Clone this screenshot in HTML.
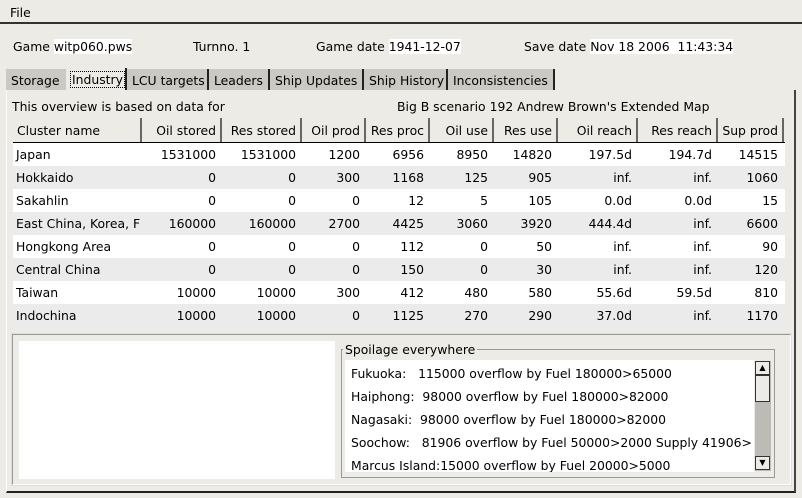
<!DOCTYPE html>
<html><head><style>
body{margin:0;width:802px;height:498px;background:#edebe6;font-family:"DejaVu Sans","Liberation Sans",sans-serif;font-size:12.4px;color:#000;position:relative;overflow:hidden}
.a{position:absolute;white-space:nowrap}
.tab{position:absolute;top:69px;height:21px;line-height:23px;background:#cbc9c3;border-right:2px solid #222;padding-left:5px;box-sizing:border-box;white-space:nowrap;overflow:hidden}
.hd{position:absolute;top:118px;height:24px;line-height:26px;text-align:right;padding-right:4px;box-sizing:border-box;border-right:2px solid #666;background:#edebe6;white-space:nowrap}
.row{position:absolute;left:13px;width:772px;height:23px;line-height:24px;white-space:nowrap}
.row span{position:absolute;text-align:right}
.row span:nth-child(2){right:569px}.row span:nth-child(3){right:489px}.row span:nth-child(4){right:425px}.row span:nth-child(5){right:361px}.row span:nth-child(6){right:297px}.row span:nth-child(7){right:233px}.row span:nth-child(8){right:153px}.row span:nth-child(9){right:73px}.row span:nth-child(10){right:7px}
</style></head><body>
<div class="a" style="left:0;top:0;width:802px;height:24px;border-bottom:2px solid #333;box-sizing:border-box"></div>
<div class="a" style="left:10px;top:5px">File</div>
<div class="a" style="left:13px;top:39px">Game <span style="background:#fff">witp060.pws</span></div>
<div class="a" style="left:193px;top:39px">Turnno. 1</div>
<div class="a" style="left:316px;top:39px">Game date <span style="background:#fff">1941-12-07</span></div>
<div class="a" style="left:524px;top:39px">Save date <span style="background:#fff">Nov 18 2006 &nbsp;11:43:34</span></div>
<div class="tab" style="left:6px;width:60px;border-right:none">Storage</div>
<div class="tab" style="left:66px;width:61px;background:#edebe6;top:68px;height:22px;line-height:24px"><span style="outline:1px dotted #000;padding:0 1px">Industry</span></div>
<div class="tab" style="left:127px;width:82px">LCU targets</div>
<div class="tab" style="left:209px;width:61px">Leaders</div>
<div class="tab" style="left:270px;width:94px">Ship Updates</div>
<div class="tab" style="left:364px;width:84px">Ship History</div>
<div class="tab" style="left:448px;width:107px">Inconsistencies</div>
<div class="a" style="left:6px;top:90px;width:790px;height:403px;border-right:2px solid #444;border-bottom:2px solid #222;border-left:1px solid #fff;box-sizing:border-box"></div>
<div class="a" style="left:12px;top:99px">This overview is based on data for</div>
<div class="a" style="left:397px;top:99px">Big B scenario 192 Andrew Brown's Extended Map</div>
<div class="a" style="left:13px;top:142px;width:772px;height:1px;background:#000"></div>
<div class="hd" style="left:13px;width:129px;text-align:left;padding-left:4px">Cluster name</div>
<div class="hd" style="left:142px;width:80px">Oil stored</div>
<div class="hd" style="left:222px;width:80px">Res stored</div>
<div class="hd" style="left:302px;width:64px">Oil prod</div>
<div class="hd" style="left:366px;width:64px">Res proc</div>
<div class="hd" style="left:430px;width:64px">Oil use</div>
<div class="hd" style="left:494px;width:64px">Res use</div>
<div class="hd" style="left:558px;width:80px">Oil reach</div>
<div class="hd" style="left:638px;width:80px">Res reach</div>
<div class="hd" style="left:718px;width:66px">Sup prod</div>
<div class="row" style="top:143px;background:#fff"><span style="left:3px;text-align:left">Japan</span><span>1531000</span><span>1531000</span><span>1200</span><span>6956</span><span>8950</span><span>14820</span><span>197.5d</span><span>194.7d</span><span>14515</span></div>
<div class="row" style="top:166px;background:#ebebeb"><span style="left:3px">Hokkaido</span><span>0</span><span>0</span><span>300</span><span>1168</span><span>125</span><span>905</span><span>inf.</span><span>inf.</span><span>1060</span></div>
<div class="row" style="top:189px;background:#fff"><span style="left:3px">Sakahlin</span><span>0</span><span>0</span><span>0</span><span>12</span><span>5</span><span>105</span><span>0.0d</span><span>0.0d</span><span>15</span></div>
<div class="row" style="top:212px;background:#ebebeb"><span style="left:3px;width:126px;overflow:hidden;text-align:left">East China, Korea, F</span><span>160000</span><span>160000</span><span>2700</span><span>4425</span><span>3060</span><span>3920</span><span>444.4d</span><span>inf.</span><span>6600</span></div>
<div class="row" style="top:235px;background:#fff"><span style="left:3px">Hongkong Area</span><span>0</span><span>0</span><span>0</span><span>112</span><span>0</span><span>50</span><span>inf.</span><span>inf.</span><span>90</span></div>
<div class="row" style="top:258px;background:#ebebeb"><span style="left:3px">Central China</span><span>0</span><span>0</span><span>0</span><span>150</span><span>0</span><span>30</span><span>inf.</span><span>inf.</span><span>120</span></div>
<div class="row" style="top:281px;background:#fff"><span style="left:3px">Taiwan</span><span>10000</span><span>10000</span><span>300</span><span>412</span><span>480</span><span>580</span><span>55.6d</span><span>59.5d</span><span>810</span></div>
<div class="row" style="top:304px;background:#ebebeb"><span style="left:3px">Indochina</span><span>10000</span><span>10000</span><span>0</span><span>1125</span><span>270</span><span>290</span><span>37.0d</span><span>inf.</span><span>1170</span></div>
<div class="a" style="left:12px;top:334px;width:779px;height:151px;border:1px solid #999;border-right-color:#fff;border-bottom-color:#fff;box-sizing:border-box;outline:1px solid #ddd"></div>
<div class="a" style="left:19px;top:341px;width:316px;height:138px;background:#fff"></div>
<div class="a" style="left:341px;top:349px;width:434px;height:129px;border:1px solid #999;box-sizing:border-box"></div>
<div class="a" style="left:343px;top:342px;background:#edebe6;padding:0 2px">Spoilage everywhere</div>
<div class="a" style="left:345px;top:360px;width:409px;height:112px;background:#fff;line-height:23px;padding-left:6px;padding-top:2px;box-sizing:border-box;overflow:hidden">Fukuoka: &nbsp; 115000 overflow by Fuel 180000&gt;65000<br>Haiphong: &nbsp;98000 overflow by Fuel 180000&gt;82000<br>Nagasaki: &nbsp;98000 overflow by Fuel 180000&gt;82000<br>Soochow: &nbsp; 81906 overflow by Fuel 50000&gt;2000 Supply 41906&gt;<br>Marcus Island:15000 overflow by Fuel 20000&gt;5000</div>
<div class="a" style="left:755px;top:361px;width:16px;height:110px;background:#bdbbb6"></div>
<div class="a" style="left:755px;top:361px;width:15px;height:14px;background:#edebe6;border:1px solid #333;box-sizing:border-box;font-size:8px;line-height:12px;text-align:center">▲</div>
<div class="a" style="left:755px;top:375px;width:15px;height:27px;background:#edebe6;border:1px solid #333;box-sizing:border-box"></div>
<div class="a" style="left:755px;top:456px;width:15px;height:14px;background:#edebe6;border:1px solid #333;box-sizing:border-box;font-size:8px;line-height:12px;text-align:center">▼</div>
</body></html>
